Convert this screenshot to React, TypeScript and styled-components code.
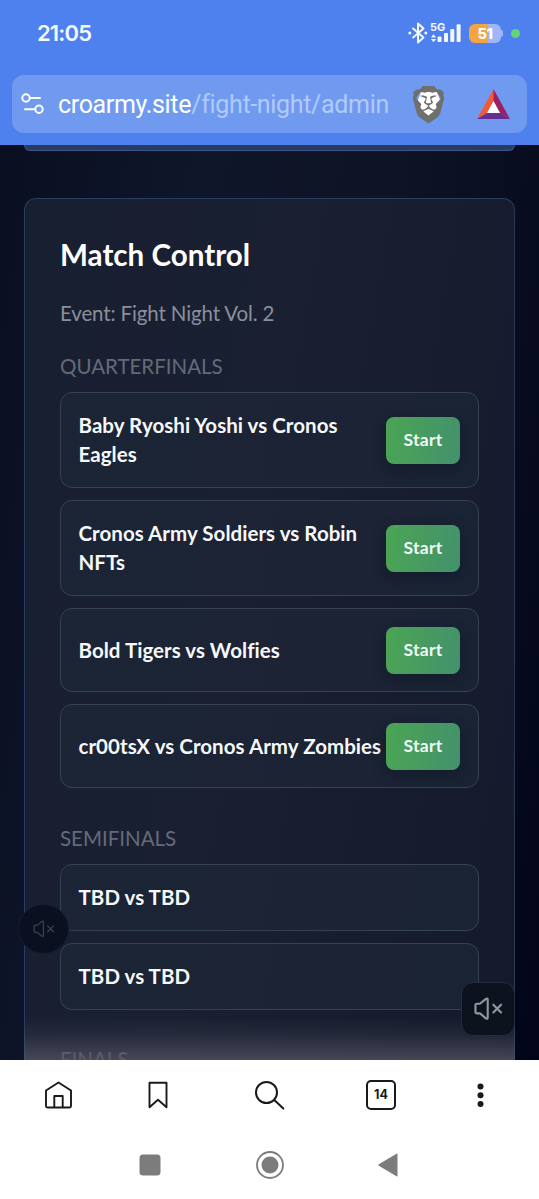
import React from "react";
import styled, { createGlobalStyle } from "styled-components";
import { SiBrave } from "react-icons/si";

const GlobalStyle = createGlobalStyle`
  * { box-sizing: border-box; }
  body { margin: 0; background: #fff; font-family: Lato, sans-serif; }
`;

const Screen = styled.div`
  display: flex;
  flex-direction: column;
  width: 539px;
  height: 1199px;
  overflow: hidden;
`;

const BrowserHeader = styled.header`
  flex: none;
  height: 145px;
  background: #4e80ee;
  display: flex;
  flex-direction: column;
  padding: 0 12px;
`;

const StatusBar = styled.div`
  height: 75px;
  padding: 0 7px 9px 25px;
  display: flex;
  align-items: center;
  justify-content: space-between;
`;

const Clock = styled.span`
  font: 600 22px Inter, sans-serif;
  letter-spacing: -0.85px;
  color: #f4f8ff;
`;

const StatusIcons = styled.div`
  display: flex;
  align-items: center;
`;

const Battery = styled.div`
  width: 32px;
  height: 19px;
  margin: 0 0 0 7px;
  border-radius: 6px;
  background: linear-gradient(90deg, #f5a442 0 58%, #9fb8f5 58%);
  color: #fff;
  font: 800 14.5px/19px Inter, sans-serif;
  letter-spacing: -0.5px;
  text-align: center;
`;

const BatteryCap = styled.span`
  width: 2px;
  height: 7px;
  border-radius: 0 2px 2px 0;
  background: #9fb8f5;
`;

const PrivacyDot = styled.span`
  width: 9px;
  height: 9px;
  margin-left: 8px;
  border-radius: 50%;
  background: #66d27a;
`;

const AddressBar = styled.div`
  height: 58px;
  border-radius: 12px;
  background: #6f9af0;
  display: flex;
  align-items: center;
  padding: 0 17px 0 9px;
`;

const Url = styled.span`
  flex: 1;
  margin-left: 13px;
  color: #fff;
  font: 400 25px Roboto, sans-serif;
  letter-spacing: -0.33px;
  white-space: nowrap;
  span { color: #b0cafa; }
`;

const Shield = styled.div`
  display: grid;
  place-items: center;
  width: 32px;
  margin-right: 35px;
  > * { grid-area: 1 / 1; }
`;

const Viewport = styled.main`
  position: relative;
  flex: none;
  height: 915px;
  overflow: hidden;
  padding: 0 24px 0 23.5px;
  background: linear-gradient(98deg, #090e20 0%, #10162a 30%, #0e1325 60%, #060a1c 88%, #02041a 100%);
`;

const PreviousCard = styled.div`
  height: 6px;
  border: 1px solid #3a5689;
  border-top: 0;
  border-radius: 0 0 12px 12px;
  background: #293c5e;
`;

const Card = styled.section`
  margin-top: 47px;
  height: 900px;
  padding: 34px 35px 34px 35.5px;
  border: 1px solid #263d65;
  border-right-color: #2b3a53;
  border-radius: 12px;
  background: linear-gradient(100deg, #181f31 0%, #1a2032 45%, #141a2b 100%);
`;

const Title = styled.h1`
  margin: 0;
  color: #fff;
  font-size: 29.6px;
  line-height: 43px;
  font-weight: 700;
`;

const EventName = styled.p`
  margin: 22px 0 0;
  color: #8b8f9b;
  font-size: 20.5px;
  line-height: 30px;
  letter-spacing: -0.13px;
`;

const RoundLabel = styled.h2<{ $gap: number }>`
  margin: ${(p) => p.$gap}px 0 11px;
  color: #656a79;
  font-size: 20.5px;
  line-height: 30px;
  font-weight: 400;
`;

const MatchList = styled.div`
  display: flex;
  flex-direction: column;
  gap: 12px;
`;

const MatchRow = styled.div<{ $height: number }>`
  height: ${(p) => p.$height}px;
  display: flex;
  align-items: center;
  justify-content: space-between;
  padding: 0 18px 0 17.5px;
  border: 1px solid #364152;
  border-radius: 12px;
  background: linear-gradient(100deg, #1b2535, #1c2334 60%, #1a2334);
`;

const MatchName = styled.div`
  margin-right: -4px;
  color: #f7f8fa;
  font-size: 20.5px;
  line-height: 29px;
  font-weight: 700;
  letter-spacing: 0.04px;
  white-space: pre-line;
`;

const StartButton = styled.button`
  flex: none;
  width: 74px;
  height: 47px;
  padding: 0 0 2px;
  border: 0;
  border-radius: 8px;
  background: linear-gradient(100deg, #4ba553, #43916d);
  box-shadow: 0 5px 14px rgba(10, 16, 30, 0.35);
  color: #f1fbf4;
  font: 700 17.5px Lato, sans-serif;
  letter-spacing: 0.3px;
`;

const BottomFade = styled.div`
  position: absolute;
  left: 24px;
  right: 24px;
  bottom: 0;
  height: 42px;
  background: linear-gradient(rgba(85, 85, 98, 0), rgba(85, 85, 98, 0.2) 40%, rgba(85, 85, 98, 0.75));
`;

const RoundMute = styled.button`
  position: absolute;
  left: 18px;
  top: 759px;
  width: 51px;
  height: 50px;
  padding: 0;
  border: 1px solid #171d2b;
  border-radius: 50%;
  background: #0b1020;
  color: #3d424f;
  display: grid;
  place-items: center;
`;

const SquareMute = styled(RoundMute)`
  left: 461px;
  top: 837px;
  width: 54px;
  height: 54px;
  border-color: #262c38;
  border-radius: 12px;
  background: #0d131e;
  color: #92969f;
`;

const Toolbar = styled.nav`
  flex: none;
  height: 70px;
  padding: 0 43px 0 42px;
  display: flex;
  align-items: center;
  justify-content: space-between;
  color: #191919;
  background: #fff;
  svg { display: block; }
`;

const SearchSlot = styled.span`
  padding: 0 12px;
`;

const TabCount = styled.span`
  width: 30px;
  height: 30px;
  border: 2px solid #191919;
  border-radius: 5px;
  font: 700 12.5px/26px Inter, sans-serif;
  text-align: center;
`;

const SystemNav = styled.nav`
  flex: none;
  height: 69px;
  padding-right: 2px;
  display: flex;
  align-items: center;
  justify-content: center;
  gap: 94.5px;
  background: #fff;
  color: #7c7c7c;
`;

const MuteIcon = ({ width, stroke = 1.7 }: { width: number; stroke?: number }) => (
  <svg width={width} height={width * 0.8} viewBox="0 0 30 24" fill="none" stroke="currentColor" strokeWidth={stroke} strokeLinejoin="round" strokeLinecap="round">
    <path d="M2.8 7h3.4L12 2.2q2.2-1.7 2.2.7v18.2q0 2.4-2.2.7L6.2 17H3.2q-1.7 0-1.7-1.7V8.7Q1.5 7 2.8 7" />
    <path d="m20 8 8 8m0-8-8 8" />
  </svg>
);

const Match = ({ name, height, startable }: { name: string; height: number; startable?: boolean }) => (
  <MatchRow $height={height}>
    <MatchName>{name}</MatchName>
    {startable && <StartButton>Start</StartButton>}
  </MatchRow>
);

export default function App() {
  return (
    <Screen>
      <GlobalStyle />
      <BrowserHeader>
        <StatusBar>
          <Clock>21:05</Clock>
          <StatusIcons>
            <svg width="54" height="24" viewBox="0 0 54 24" fill="none" stroke="#f4f8ff" strokeWidth="2">
              <path d="m4.500 7 11 9.500-5.500 5V2.500l5.500 5-11 9.500" strokeLinejoin="round" />
              <g fill="#f4f8ff" stroke="none">
                <circle cx="1.8" cy="12" r="1.5" />
                <circle cx="17.8" cy="12" r="1.5" />
                <path d="m25.500 13.300 2.600 3.200h-5.200zm0 8-2.600-3.200h5.200z" />
                <rect x="29.5" y="15.5" width="4" height="5.5" rx="1" />
                <rect x="36" y="12" width="4" height="9" rx="1" />
                <rect x="42.3" y="8" width="4" height="13" rx="1" />
                <rect x="48.6" y="3.3" width="4" height="17.7" rx="1" />
                <text x="22" y="9.8" fontFamily="Inter" fontSize="11" fontWeight="700">5G</text>
              </g>
            </svg>
            <Battery>51</Battery>
            <BatteryCap />
            <PrivacyDot />
          </StatusIcons>
        </StatusBar>
        <AddressBar>
          <svg width="24" height="24" viewBox="0 0 24 24" fill="none" stroke="#fff" strokeWidth="2" strokeLinecap="round">
            <circle cx="5" cy="6" r="3.7" />
            <path d="M9 6h10M4 17.300h9.500" />
            <circle cx="18" cy="17.3" r="3.7" />
          </svg>
          <Url>croarmy.site<span>/fight-night/admin</span></Url>
          <Shield>
            <svg width="32" height="38" viewBox="0 0 32 38">
              <path d="M8 7h16l3 8-3 11-8 6-8-6-3-11Z" fill="#fff" />
            </svg>
            <SiBrave size={37} color="#6d706d" />
          </Shield>
          <svg width="33" height="30" viewBox="0 0 33 30">
            <path d="M16.500 0 0 30l10-6 6.500-11.500Z" fill="#f15a35" />
            <path d="M16.500 0 33 30l-10-6-6.500-11.500Z" fill="#9c1f63" />
            <path d="M0 30h33l-10-6H10Z" fill="#652d91" />
            <path d="m16.500 12 6.500 12H10Z" fill="#fff" />
          </svg>
        </AddressBar>
      </BrowserHeader>

      <Viewport>
        <PreviousCard />
        <Card>
          <Title>Match Control</Title>
          <EventName>Event: Fight Night Vol. 2</EventName>
          <RoundLabel $gap={23}>QUARTERFINALS</RoundLabel>
          <MatchList>
            <Match name={"Baby Ryoshi Yoshi vs Cronos\nEagles"} height={96} startable />
            <Match name={"Cronos Army Soldiers vs Robin\nNFTs"} height={96} startable />
            <Match name="Bold Tigers vs Wolfies" height={84} startable />
            <Match name="cr00tsX vs Cronos Army Zombies" height={84} startable />
          </MatchList>
          <RoundLabel $gap={35}>SEMIFINALS</RoundLabel>
          <MatchList>
            <Match name="TBD vs TBD" height={67} />
            <Match name="TBD vs TBD" height={67} />
          </MatchList>
          <RoundLabel $gap={34}>FINALS</RoundLabel>
        </Card>
        <BottomFade />
        <RoundMute aria-label="Unmute"><MuteIcon width={22} /></RoundMute>
        <SquareMute aria-label="Unmute"><MuteIcon width={29} stroke={2.2} /></SquareMute>
      </Viewport>

      <Toolbar>
        <svg width="32" height="32" viewBox="0 0 32 32" fill="none" stroke="currentColor" strokeWidth="1.9" strokeLinejoin="round">
          <path d="M4 11.500 16.500 3.500 29 11.500V27q0 1.500-1.500 1.500h-22Q4 28.500 4 27ZM12.300 28.500V17h8.400v11.500" />
        </svg>
        <svg width="32" height="32" viewBox="0 0 32 32" fill="none" stroke="currentColor" strokeWidth="1.9" strokeLinejoin="round">
          <path d="M7.500 3.800h17v24.400L16 20.800l-8.500 7.400Z" />
        </svg>
        <SearchSlot>
          <svg width="32" height="32" viewBox="0 0 32 32" fill="none" stroke="currentColor" strokeWidth="2" strokeLinecap="round">
            <circle cx="12.5" cy="13.5" r="10.5" />
            <path d="m20.300 21 9 8.500" />
          </svg>
        </SearchSlot>
        <TabCount>14</TabCount>
        <svg width="32" height="32" viewBox="0 0 32 32" fill="currentColor">
          <circle cx="16.5" cy="7.5" r="3" />
          <circle cx="16.5" cy="16.2" r="3" />
          <circle cx="16.5" cy="25" r="3" />
        </svg>
      </Toolbar>
      <SystemNav>
        <svg width="22" height="22" viewBox="0 0 22 22"><rect x="0.5" y="0.5" width="21" height="21" rx="3.5" fill="currentColor" /></svg>
        <svg width="28" height="28" viewBox="0 0 28 28">
          <circle cx="14" cy="14" r="13" fill="none" stroke="currentColor" strokeWidth="1.8" />
          <circle cx="14" cy="14" r="8.5" fill="currentColor" />
        </svg>
        <svg width="20" height="24" viewBox="0 0 20 24"><path d="M19.500 1.200v21.600q0 1-1 .5L.8 12.700q-1-.7 0-1.400L18.500.7q1-.5 1 .5" fill="currentColor" /></svg>
      </SystemNav>
    </Screen>
  );
}
